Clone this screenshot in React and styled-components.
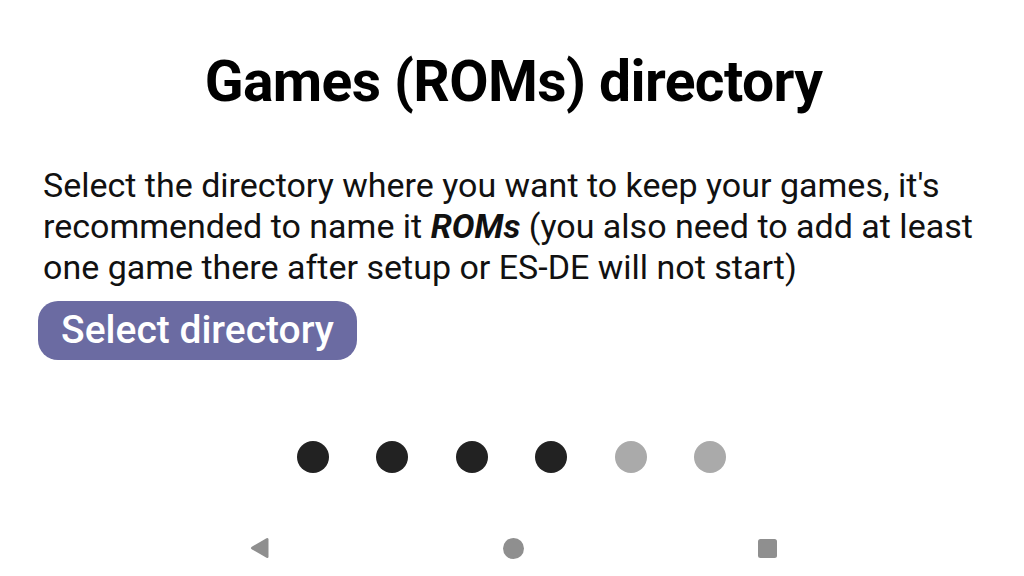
import React from "react";
import styled, { createGlobalStyle } from "styled-components";

const GlobalStyle = createGlobalStyle`
    html, body {
        margin: 0;
        padding: 0;
        background: #fff;
    }
    body {
        font-family: Roboto, "Noto Sans", sans-serif;
    }
`;

const Screen = styled.div`
    width: 1024px;
    height: 576px;
    display: flex;
    flex-direction: column;
    overflow: hidden;
    background: #fff;
`;

const Content = styled.div`
    flex: 1;
    display: flex;
    flex-direction: column;
    padding: 0 40px 0 43px;
`;

const Title = styled.h1`
    margin: 46px 0 0 0;
    text-align: center;
    font-size: 57px;
    font-weight: 700;
    letter-spacing: -0.6px;
    line-height: 72px;
    color: #000;
`;

const Description = styled.p`
    margin: 47px 0 0 0;
    font-size: 34px;
    line-height: 41px;
    color: #111;
`;

const Button = styled.button`
    align-self: flex-start;
    margin: 13px 0 0 -5px;
    width: 319px;
    height: 59px;
    border: none;
    border-radius: 20px;
    background-color: #6b6ba2;
    color: #fff;
    font-family: Roboto, sans-serif;
    font-size: 39px;
    font-weight: 500;
    padding: 0 0 2px 0;
    cursor: pointer;
`;

const Dots = styled.div`
    display: flex;
    justify-content: center;
    gap: 47.5px;
    margin-top: 81px;
    padding-right: 4px;
`;

const Dot = styled.span`
    width: 32px;
    height: 32px;
    border-radius: 50%;
    background: ${(p) => (p.$active ? "#222" : "#aaa")};
`;

const NavBar = styled.div`
    height: 56px;
    display: flex;
    justify-content: center;
    align-items: center;
    padding-left: 2px;
`;

const NavSlot = styled.div`
    width: 254px;
    display: flex;
    justify-content: center;
    align-items: center;
`;

const NavIcon = styled.svg`
    fill: #8f8f8f;
`;

const steps = [true, true, true, true, false, false];

const App = () => {
    return (
        <>
            <GlobalStyle />
            <Screen>
                <Content>
                    <Title>Games (ROMs) directory</Title>
                    <Description>
                        Select the directory where you want to keep your games, it's recommended to name it{" "}
                        <b><i>ROMs</i></b> (you also need to add at least one game there after setup or ES-DE will not start)
                    </Description>
                    <Button>Select directory</Button>
                    <Dots>
                        {steps.map((active, i) => (
                            <Dot key={i} $active={active} />
                        ))}
                    </Dots>
                </Content>
                <NavBar>
                    <NavSlot>
                        <NavIcon width="19" height="22" viewBox="0 0 19 22">
                            <path d="M16.5 1.2 Q18.5 0.2 18.5 2.5 V19.5 Q18.5 21.8 16.5 20.8 L1.8 12.3 Q0 11 1.8 9.7 Z" />
                        </NavIcon>
                    </NavSlot>
                    <NavSlot>
                        <NavIcon width="21" height="21" viewBox="0 0 21 21">
                            <circle cx="10.5" cy="10.5" r="10.5" />
                        </NavIcon>
                    </NavSlot>
                    <NavSlot>
                        <NavIcon width="19" height="19" viewBox="0 0 19 19">
                            <rect x="0" y="0" width="19" height="19" rx="2.5" />
                        </NavIcon>
                    </NavSlot>
                </NavBar>
            </Screen>
        </>
    );
};

export default App;
